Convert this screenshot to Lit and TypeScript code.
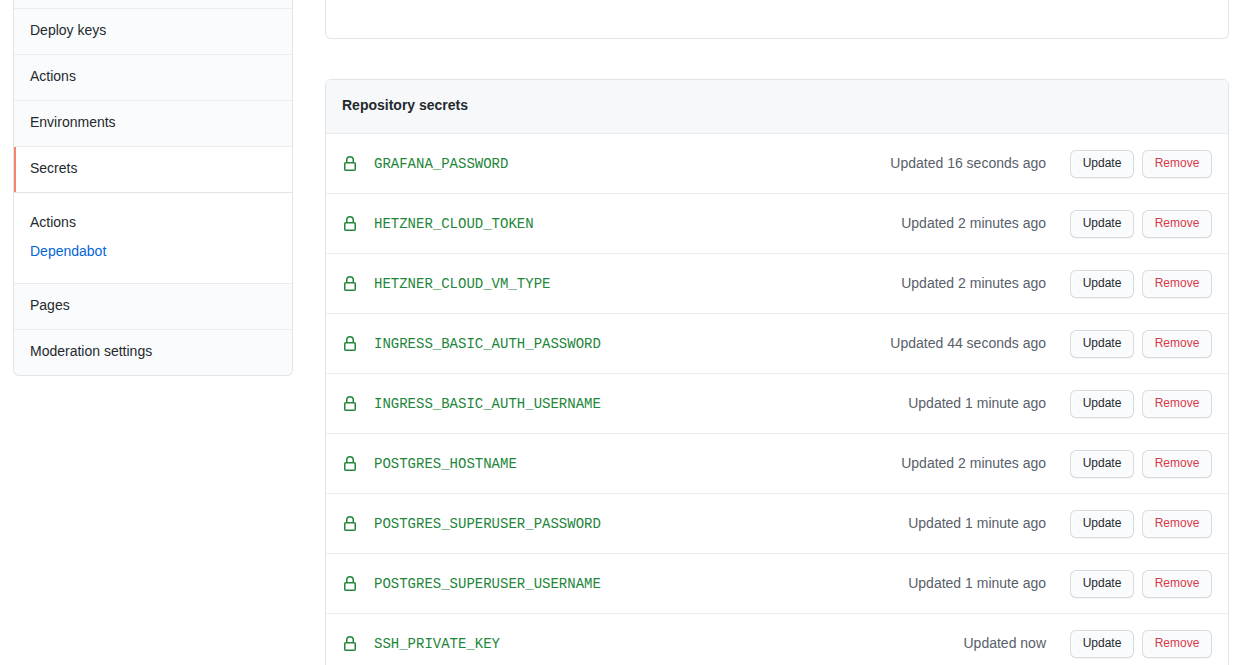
import { LitElement, html, css, svg } from "lit";
import { customElement, property } from "lit/decorators.js";

const lockIcon = svg`<svg class="lock" viewBox="0 0 16 16" width="16" height="16" aria-hidden="true">
  <path fill="currentColor" fill-rule="evenodd" d="M4 4v2h-.25A1.75 1.75 0 002 7.75v5.5c0 .966.784 1.75 1.75 1.75h8.5A1.75 1.75 0 0014 13.25v-5.5A1.75 1.75 0 0012.25 6H12V4a4 4 0 10-8 0zm6.5 2V4a2.5 2.5 0 10-5 0v2h5zM12 7.5h.25a.25.25 0 01.25.25v5.5a.25.25 0 01-.25.25h-8.5a.25.25 0 01-.25-.25v-5.5a.25.25 0 01.25-.25H12z"/>
</svg>`;

const secrets: [string, string][] = [
  ["GRAFANA_PASSWORD", "16 seconds ago"],
  ["HETZNER_CLOUD_TOKEN", "2 minutes ago"],
  ["HETZNER_CLOUD_VM_TYPE", "2 minutes ago"],
  ["INGRESS_BASIC_AUTH_PASSWORD", "44 seconds ago"],
  ["INGRESS_BASIC_AUTH_USERNAME", "1 minute ago"],
  ["POSTGRES_HOSTNAME", "2 minutes ago"],
  ["POSTGRES_SUPERUSER_PASSWORD", "1 minute ago"],
  ["POSTGRES_SUPERUSER_USERNAME", "1 minute ago"],
  ["SSH_PRIVATE_KEY", "now"],
];

@customElement("secret-row")
class SecretRow extends LitElement {
  @property() secretName = "";
  @property() age = "";

  static styles = css`
    :host {
      display: flex;
      align-items: center;
      box-sizing: border-box;
      height: 60px;
      padding: 0 16px;
      border-top: 1px solid #eaecef;
    }
    .lock {
      display: block;
      flex: none;
      color: #22863a;
    }
    .name {
      flex: 1;
      margin-left: 16px;
      padding-top: 2px;
      font: 14px/21px "Liberation Mono", monospace;
      color: #22863a;
    }
    .updated {
      margin-right: 24px;
      color: #586069;
    }
    button {
      box-sizing: border-box;
      height: 28px;
      padding: 0 0 2px;
      border: 1px solid rgba(27, 31, 35, 0.15);
      border-radius: 6px;
      background: #fafbfc;
      box-shadow: 0 1px 0 rgba(27, 31, 35, 0.04), inset 0 1px 0 rgba(255, 255, 255, 0.25);
      font: 500 12px/20px "Liberation Sans", Arial, sans-serif;
      color: #24292e;
    }
    .update {
      width: 64px;
    }
    .remove {
      width: 70px;
      margin-left: 8px;
      color: #d73a49;
    }
  `;

  render() {
    return html`
      ${lockIcon}
      <span class="name">${this.secretName}</span>
      <span class="updated">Updated ${this.age}</span>
      <button class="update">Update</button>
      <button class="remove">Remove</button>
    `;
  }
}

@customElement("app-root")
class AppRoot extends LitElement {
  static styles = css`
    :host {
      display: flex;
      align-items: flex-start;
      gap: 32px;
      box-sizing: border-box;
      height: 665px;
      padding: 0 17px 0 13px;
      overflow: hidden;
      background: #fff;
      color: #24292e;
      font: 14px/21px "Liberation Sans", Arial, sans-serif;
    }
    .menu {
      box-sizing: border-box;
      width: 280px;
      border: 1px solid #e1e4e8;
      border-top: 0;
      border-radius: 0 0 6px 6px;
      background: #fafbfc;
      overflow: hidden;
    }
    .stub {
      height: 8px;
    }
    .item {
      box-sizing: border-box;
      height: 46px;
      padding: 11px 16px 0;
      border-top: 1px solid #eaecef;
    }
    .selected {
      background: #fff;
      box-shadow: inset 2px 0 0 #f9826c;
    }
    .submenu {
      box-sizing: border-box;
      height: 91px;
      padding: 15px 16px 0;
      border-top: 1px solid #e1e4e8;
      background: #fff;
    }
    .sub {
      padding: 4px 0;
    }
    .link {
      color: #0366d6;
    }
    .main {
      flex: 1;
    }
    .box {
      border: 1px solid #e1e4e8;
      border-radius: 6px;
    }
    .previous {
      height: 38px;
      margin-bottom: 40px;
      border-top: 0;
      border-radius: 0 0 6px 6px;
    }
    .header {
      box-sizing: border-box;
      height: 53px;
      padding-top: 15px;
      padding-left: 16px;
      border-radius: 5px 5px 0 0;
      background: #f6f8fa;
      font-weight: 700;
    }
  `;

  render() {
    return html`
      <nav class="menu">
        <div class="stub"></div>
        <div class="item">Deploy keys</div>
        <div class="item">Actions</div>
        <div class="item">Environments</div>
        <div class="item selected">Secrets</div>
        <div class="submenu">
          <div class="sub">Actions</div>
          <div class="sub link">Dependabot</div>
        </div>
        <div class="item">Pages</div>
        <div class="item">Moderation settings</div>
      </nav>
      <main class="main">
        <div class="box previous"></div>
        <section class="box">
          <div class="header">Repository secrets</div>
          ${secrets.map(([name, age]) => html`<secret-row .secretName=${name} .age=${age}></secret-row>`)}
        </section>
      </main>
    `;
  }
}
